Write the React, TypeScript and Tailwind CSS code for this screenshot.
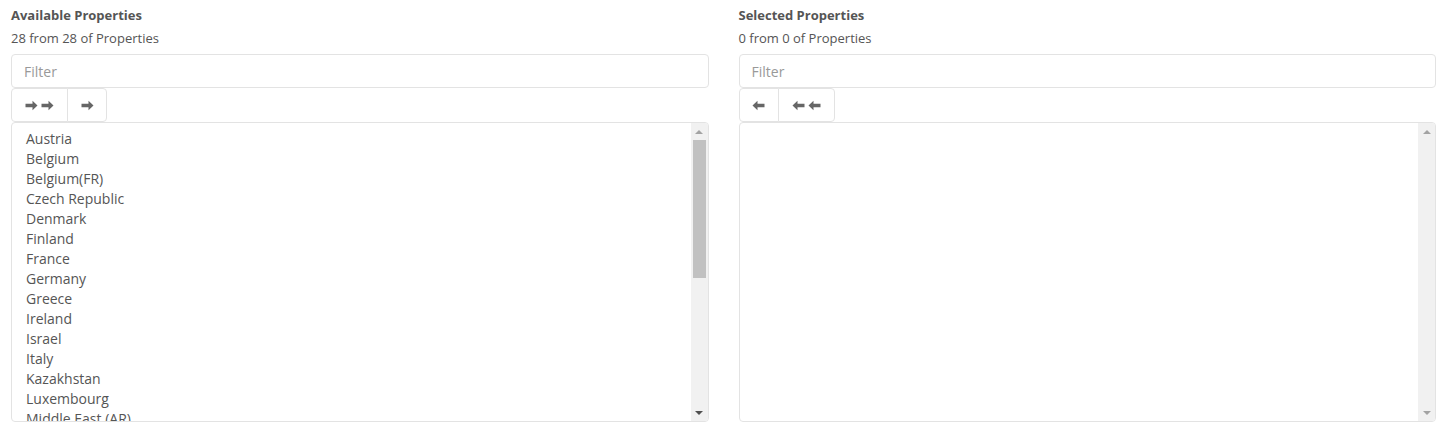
const countries = [
  'Austria',
  'Belgium',
  'Belgium(FR)',
  'Czech Republic',
  'Denmark',
  'Finland',
  'France',
  'Germany',
  'Greece',
  'Ireland',
  'Israel',
  'Italy',
  'Kazakhstan',
  'Luxembourg',
  'Middle East (AR)',
];

function Arrow({ left }: { left?: boolean }) {
  return (
    <svg
      width="13"
      height="11"
      viewBox="0 0 13 11"
      className={left ? 'rotate-180' : ''}
      fill="#666"
    >
      <path d="M0.5 3.8h7V0.8L12.5 5.5l-5 4.7V7.2h-7z" />
    </svg>
  );
}

function Scrollbar({ thumb, downDark }: { thumb: boolean; downDark: boolean }) {
  return (
    <div className="flex w-[17px] shrink-0 flex-col bg-[#f1f1f1]">
      <div className="flex h-[17px] items-center justify-center">
        <div className="h-0 w-0 border-x-[4px] border-b-[4px] border-x-transparent border-b-[#a3a3a3]" />
      </div>
      <div className="flex-1 px-[2px]">
        {thumb && <div className="h-[138px] w-full bg-[#c1c1c1]" />}
      </div>
      <div className="flex h-[17px] items-center justify-center">
        <div
          className={
            downDark
              ? 'h-0 w-0 border-x-[4px] border-t-[4px] border-x-transparent border-t-[#505050]'
              : 'h-0 w-0 border-x-[4px] border-t-[4px] border-x-transparent border-t-[#a3a3a3]'
          }
        />
      </div>
    </div>
  );
}

function Column({
  title,
  info,
  items,
  buttons,
}: {
  title: string;
  info: string;
  items: string[];
  buttons: React.ReactNode;
}) {
  return (
    <div className="flex min-w-0 flex-1 flex-col">
      <div className="h-[18px] text-[13px] font-bold leading-[18px] text-[#555]">{title}</div>
      <div className="mt-[5px] h-[18px] text-[13px] leading-[18px] text-[#555]">{info}</div>
      <input
        className="mt-[7px] h-[34px] w-full rounded-[4px] border border-[#e3e3e3] px-[12px] text-[14px] text-[#555] outline-none placeholder:text-[#999]"
        placeholder="Filter"
      />
      <div className="flex h-[34px]">{buttons}</div>
      <div className="flex h-[300px] overflow-hidden rounded-[4px] border border-[#e3e3e3]">
        <div className="min-w-0 flex-1 overflow-hidden pl-[14px] pt-[6px]">
          {items.map((c) => (
            <div key={c} className="h-[20px] text-[14px] leading-[20px] text-[#555]">
              {c}
            </div>
          ))}
        </div>
        <Scrollbar thumb={items.length > 0} downDark={items.length > 0} />
      </div>
    </div>
  );
}

const btn =
  'flex h-full items-center justify-center gap-[3px] border border-[#e3e3e3] bg-white';

export default function App() {
  return (
    <div
      className="flex gap-[30px] bg-white px-[11px] pt-[6px]"
      style={{ fontFamily: '"Open Sans", sans-serif' }}
    >
      <Column
        title="Available Properties"
        info="28 from 28 of Properties"
        items={countries}
        buttons={
          <>
            <button className={btn + ' w-[57px] rounded-l-[4px]'}>
              <Arrow />
              <Arrow />
            </button>
            <button className={btn + ' -ml-px w-[40px] rounded-r-[4px]'}>
              <Arrow />
            </button>
          </>
        }
      />
      <Column
        title="Selected Properties"
        info="0 from 0 of Properties"
        items={[]}
        buttons={
          <>
            <button className={btn + ' w-[40px] rounded-l-[4px]'}>
              <Arrow left />
            </button>
            <button className={btn + ' -ml-px w-[57px] rounded-r-[4px]'}>
              <Arrow left />
              <Arrow left />
            </button>
          </>
        }
      />
    </div>
  );
}
